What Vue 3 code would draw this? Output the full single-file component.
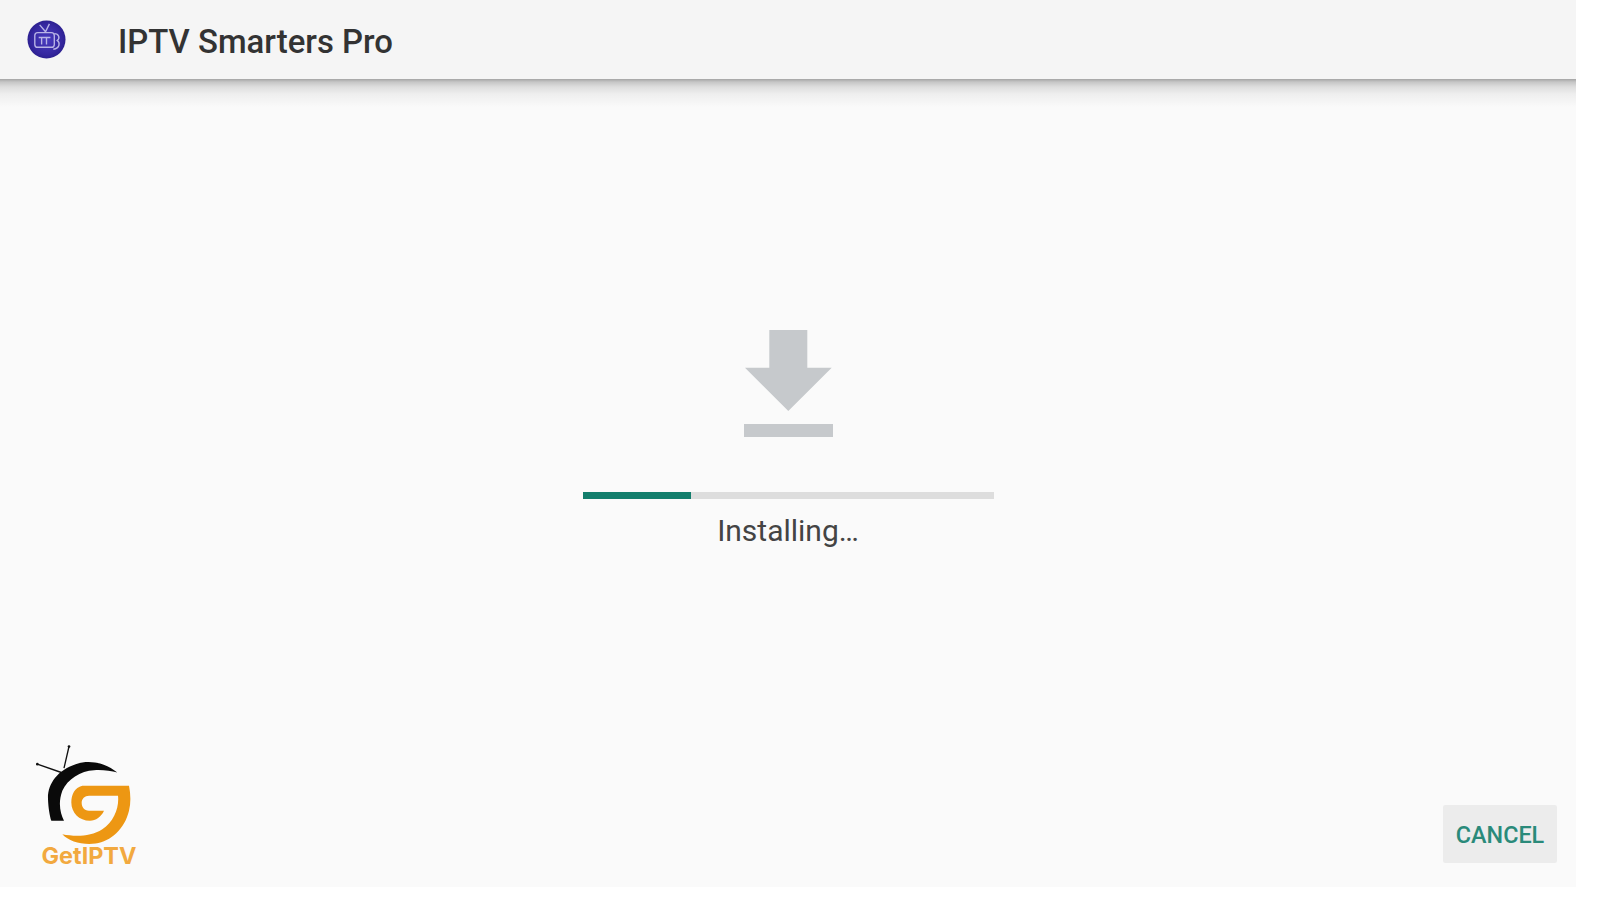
<script setup>
const progress = 26.3
</script>

<template>
  <div class="screen">
    <header class="bar">
      <svg class="app-icon" viewBox="0 0 40 40" aria-hidden="true">
        <defs>
          <radialGradient id="iconFill" cx="50%" cy="50%" r="50%">
            <stop offset="0%" stop-color="#4a3cc0" />
            <stop offset="80%" stop-color="#35279f" />
            <stop offset="100%" stop-color="#2c2090" />
          </radialGradient>
        </defs>
        <circle cx="20" cy="20" r="19.5" fill="url(#iconFill)" />
        <g fill="none" stroke="#b9b4e6" stroke-width="1.4">
          <path d="M13 5l6 7 4-8" />
          <rect x="8" y="13" width="20" height="15" rx="3" />
          <path d="M28 14c5 0 6 5 3 7 3 2 3 8-4 9" />
          <path d="M12 18h12M15 18v7M20 18v7" />
        </g>
      </svg>
      <h1 class="title">IPTV Smarters Pro</h1>
    </header>

    <main class="body">
      <div class="install">
        <svg class="download" viewBox="0 0 89 107" aria-hidden="true">
          <path d="M25.3 0h38v37.7h24.4L44.3 81 1 37.7h24.3z" />
          <rect y="94" width="89" height="13" />
        </svg>
        <div class="track">
          <div class="fill" :style="{ width: progress + '%' }"></div>
        </div>
        <p class="status">Installing…</p>
      </div>
    </main>

    <footer class="foot">
      <div class="brand">
        <svg class="logo" viewBox="100 37 300 302" aria-hidden="true">
          <path d="M205 47L190 112M110 100L182 125" fill="none" stroke="#111" stroke-width="4" />
          <circle cx="205" cy="47" r="4" fill="#111" />
          <circle cx="110" cy="100" r="4" fill="#111" />
          <path d="M350 125C315 98 270 85 225 100 170 118 140 160 142 205 143 230 147 255 152 270L190 270C178 245 172 215 185 180 200 145 240 120 280 118 305 116 330 120 350 125Z" fill="#0a0a0a" />
          <path d="M310 240H265C250 240 243 228 243 216 243 205 252 195 265 195H352C356 230 340 272 305 295 270 317 225 318 185 310 205 332 245 343 285 338 330 332 372 295 385 240 391 215 390 190 385 165H245C222 170 212 192 212 215 212 245 235 270 268 270 285 270 302 258 310 240Z" fill="#ed9713" />
        </svg>
        <span class="brand-name">GetIPTV</span>
      </div>
      <button class="cancel" type="button">CANCEL</button>
    </footer>
  </div>
</template>

<style>
html, body { margin: 0; background: #fff; }
</style>

<style scoped>
.screen {
  width: 1576px;
  height: 887px;
  background: #fafafa;
  display: flex;
  flex-direction: column;
  font-family: Roboto, "Liberation Sans", sans-serif;
  overflow: hidden;
}
.bar {
  height: 79px;
  flex: none;
  background: #f5f5f5;
  display: flex;
  align-items: center;
  gap: 52px;
  padding-left: 27px;
  box-sizing: border-box;
  position: relative;
}
.bar::after {
  content: "";
  position: absolute;
  left: 0;
  right: 0;
  top: 100%;
  height: 28px;
  background: linear-gradient(to bottom, #a4a4a4 0, #c6c6c6 3px, #dedede 8px, #eeeeee 15px, #fafafa 100%);
}
.app-icon { width: 39px; height: 39px; flex: none; }
.title {
  margin: 4px 0 0;
  font-size: 32.9px;
  font-weight: 500;
  color: #333333;
}
.body {
  flex: 1;
  display: flex;
  flex-direction: column;
  align-items: center;
  min-height: 0;
}
.install {
  margin-top: 251px;
  display: flex;
  flex-direction: column;
  align-items: center;
}
.download { width: 89px; height: 107px; fill: #c6c9cc; }
.track {
  width: 411px;
  height: 7px;
  margin-top: 54.5px;
  background: #dddddd;
}
.fill { height: 100%; background: #137e6c; }
.status {
  margin: 14px 0 0;
  font-size: 30px;
  line-height: 36px;
  color: #444444;
}
.foot {
  flex: none;
  height: 145px;
  padding: 0 19px 19px 34px;
  display: flex;
  justify-content: space-between;
  align-items: flex-end;
}
.brand {
  display: flex;
  flex-direction: column;
  align-items: center;
  width: 110px;
}
.logo { width: 100px; height: 101px; align-self: flex-start; }
.brand-name {
  font-family: Inter, sans-serif;
  font-size: 23.4px;
  line-height: 24px;
  font-weight: 700;
  color: #f2a93f;
}
.cancel {
  width: 114px;
  height: 58px;
  margin-bottom: 5px;
  border: 0;
  border-radius: 2px;
  padding: 2px 0 0;
  background: #ececec;
  color: #2a8a7a;
  font-family: Roboto, sans-serif;
  font-size: 23.4px;
  font-weight: 500;
}
</style>
